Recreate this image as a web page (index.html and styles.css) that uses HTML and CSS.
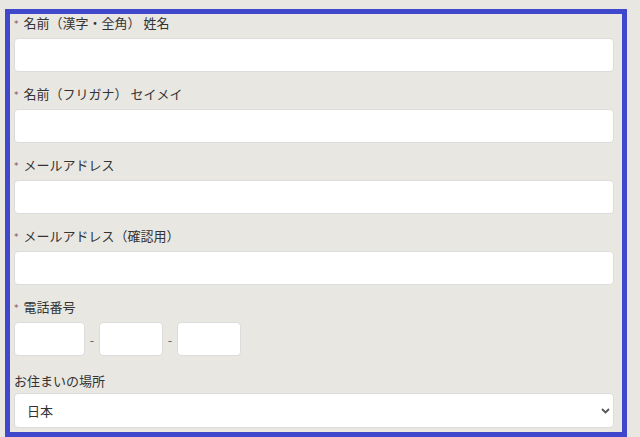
FILE: index.html
```html
<!DOCTYPE html>
<html lang="ja">

<head>
    <meta charset="UTF-8">
    <meta name="viewport" content="width=device-width, initial-scale=1.0">
    <title>お問い合わせ</title>
    <link rel="stylesheet" href="styles.css">
</head>

<body>
    <form class="entry-form" id="entryForm">
        <div class="field">
            <label class="field-label" for="nameKanji"><span class="req">*</span>名前（漢字・全角） 姓名</label>
            <input type="text" id="nameKanji" class="text-input">
        </div>

        <div class="field">
            <label class="field-label" for="nameKana"><span class="req">*</span>名前（フリガナ） セイメイ</label>
            <input type="text" id="nameKana" class="text-input">
        </div>

        <div class="field">
            <label class="field-label" for="email"><span class="req">*</span>メールアドレス</label>
            <input type="email" id="email" class="text-input">
        </div>

        <div class="field">
            <label class="field-label" for="emailConfirm"><span class="req">*</span>メールアドレス（確認用）</label>
            <input type="email" id="emailConfirm" class="text-input">
        </div>

        <div class="field">
            <label class="field-label" for="tel1"><span class="req">*</span>電話番号</label>
            <div class="tel-row">
                <input type="tel" id="tel1" class="text-input tel-first">
                <span class="tel-sep">-</span>
                <input type="tel" id="tel2" class="text-input tel-part">
                <span class="tel-sep">-</span>
                <input type="tel" id="tel3" class="text-input tel-part">
            </div>
        </div>

        <div class="field field-area">
            <label class="field-label" for="area">お住まいの場所</label>
            <div class="select-wrap">
                <select id="area" class="select-input">
                    <option value="jp">日本</option>
                    <option value="other">その他</option>
                </select>
                <svg class="select-arrow" width="9" height="6" viewBox="0 0 9 6">
                    <path d="M1 1 L4.5 4.5 L8 1" fill="none" stroke="#555" stroke-width="1.8"/>
                </svg>
            </div>
        </div>
    </form>
</body>

</html>
```

FILE: styles.css
```css
body {
    font-family: "Noto Sans CJK JP", "Noto Sans", sans-serif;
    background-color: #e9e7e2;
    color: #333;
    margin: 0;
    font-size: 13px;
}

.entry-form {
    margin: 9px 13px 0 5px;
    border: 5px solid #3f47cc;
    padding: 0 8px 0 4px;
    height: 428px;
    box-sizing: border-box;
    overflow: hidden;
}

.field {
    margin-top: 13px;
}

.field:first-child {
    margin-top: 0;
}

.field-label {
    display: flex;
    align-items: center;
    height: 18px;
    line-height: 18px;
    margin-bottom: 6px;
}

.req {
    color: #8b4a3c;
    font-family: "DejaVu Sans", sans-serif;
    font-size: 9px;
    line-height: 10px;
    margin-right: 5px;
    position: relative;
    top: 1px;
}

.text-input {
    display: block;
    width: 100%;
    height: 34px;
    box-sizing: border-box;
    border: 1px solid #dcdcdc;
    border-radius: 4px;
    background-color: #fff;
    font-family: inherit;
    font-size: 13px;
    padding: 0 10px;
    margin: 0;
}

.tel-row {
    display: flex;
    align-items: center;
}

.tel-row .tel-part {
    width: 64px;
}

.tel-row .tel-first {
    width: 71px;
}

.tel-sep {
    width: 14px;
    text-align: center;
    color: #666;
}

.field-area {
    margin-top: 16px;
}

.field-area .field-label {
    margin-bottom: 3px;
}

.select-wrap {
    position: relative;
}

.select-input {
    display: block;
    width: 100%;
    height: 35px;
    box-sizing: border-box;
    border: 1px solid #dcdcdc;
    border-radius: 4px;
    background-color: #fff;
    color: #333;
    font-family: inherit;
    font-size: 13px;
    padding: 0 12px;
    appearance: none;
    -webkit-appearance: none;
}

.select-arrow {
    position: absolute;
    right: 4px;
    top: 15px;
}
```
